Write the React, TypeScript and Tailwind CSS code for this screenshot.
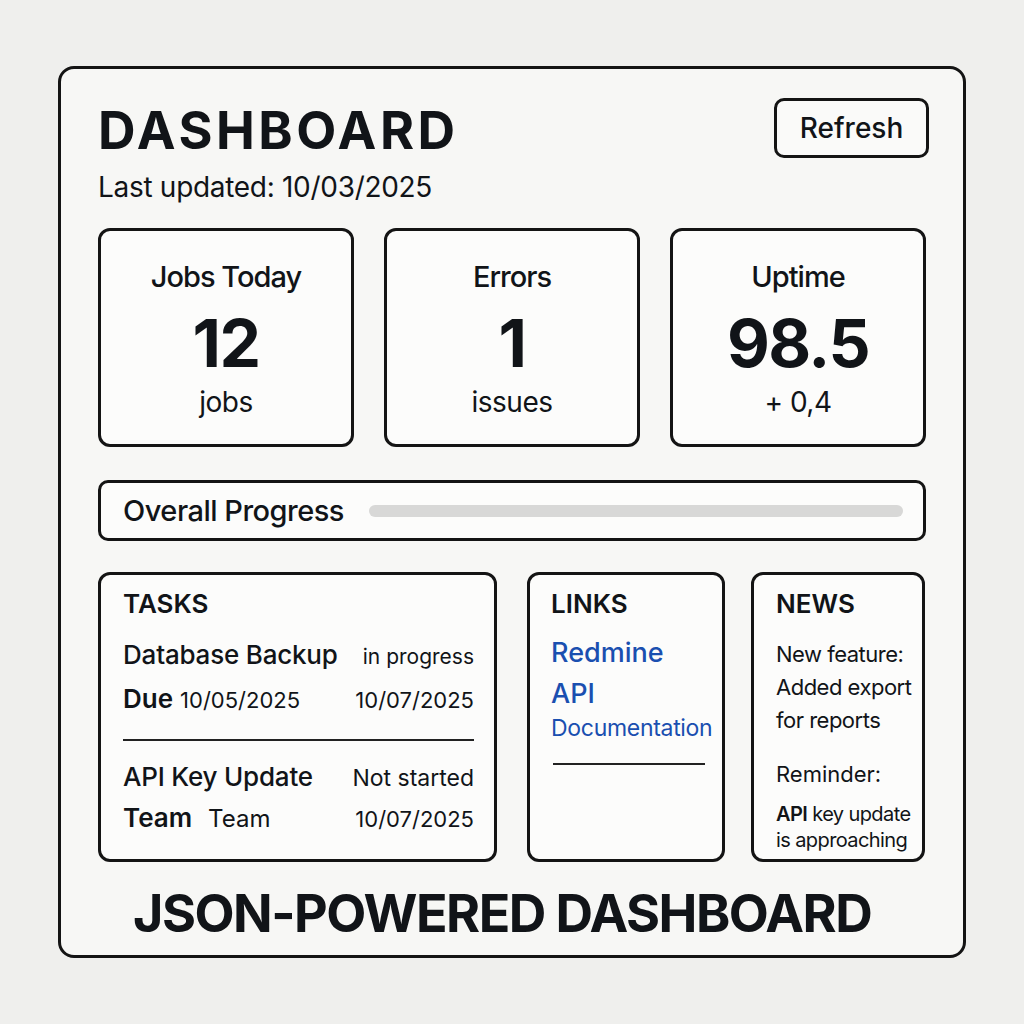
import React from 'react'

const stats = [
  { title: 'Jobs Today', value: '12', sub: 'jobs' },
  { title: 'Errors', value: '1', sub: 'issues' },
  { title: 'Uptime', value: '98.5', sub: '+ 0,4' },
]

function StatCard({ title, value, sub }: { title: string; value: string; sub: string }) {
  return (
    <div className="flex h-[219px] flex-col items-center rounded-[12px] border-[3px] border-[#141414] bg-[#fcfcfb] pt-[30px]">
      <div className="text-[29px] font-medium leading-[32px] tracking-[-1px]">{title}</div>
      <div className="mt-[17px] text-[66px] font-bold leading-[66px] tracking-[-1.5px]">{value}</div>
      <div className="mt-[10px] text-[28px] leading-[32px] tracking-[-0.5px]">{sub}</div>
    </div>
  )
}

export default function App() {
  return (
    <div
      className="min-h-screen w-full bg-[#efefed] pt-[66px] text-[#111418]"
      style={{ fontFamily: 'Inter, "Noto Sans", sans-serif' }}
    >
      <div className="ml-[58px] flex h-[892px] w-[908px] flex-col rounded-[16px] border-[3px] border-[#141414] bg-[#f7f7f5] px-[37px] pt-[29px]">
        {/* header */}
        <div className="flex items-start justify-between">
          <div className="mt-[7px]">
            <h1 className="text-[52px] font-bold leading-[52px] tracking-[3.5px]">DASHBOARD</h1>
            <p className="mt-[14px] text-[28px] leading-[32px] tracking-[-0.3px]">Last updated: 10/03/2025</p>
          </div>
          <button
            type="button"
            className="mr-[-3px] flex h-[60px] w-[155px] items-center justify-center rounded-[10px] border-[3px] border-[#141414] bg-[#fafaf9] text-[28px] font-medium leading-[32px]"
          >
            Refresh
          </button>
        </div>

        {/* stats */}
        <div className="mt-[25px] grid grid-cols-3 gap-[30px]">
          {stats.map((s) => (
            <StatCard key={s.title} {...s} />
          ))}
        </div>

        {/* progress */}
        <div className="mt-[33px] flex h-[61px] items-center rounded-[10px] border-[3px] border-[#141414] bg-[#fcfcfb] pl-[22px] pr-[20px]">
          <span className="text-[29px] font-medium leading-[32px] tracking-[-0.5px]">Overall Progress</span>
          <div className="ml-[25px] h-[12px] flex-1 rounded-full bg-[#d8d8d7]" />
        </div>

        {/* bottom */}
        <div className="mt-[31px] flex h-[290px]">
          <div className="w-[399px] rounded-[12px] border-[3px] border-[#141414] bg-[#fcfcfb] pl-[22px] pr-[20px] pt-[14px]">
            <div className="text-[26px] font-semibold leading-[30px]">TASKS</div>
            <div className="mt-[21px] flex items-baseline justify-between leading-[30px]">
              <span className="text-[26px] font-medium tracking-[-0.2px]">Database Backup</span>
              <span className="text-[21px]">in progress</span>
            </div>
            <div className="mt-[12px] flex items-baseline justify-between leading-[30px]">
              <span>
                <span className="text-[26px] font-semibold">Due</span>
                <span className="ml-[7px] text-[22px]">10/05/2025</span>
              </span>
              <span className="text-[22px]">10/07/2025</span>
            </div>
            <div className="mt-[22px] h-[2px] bg-[#222]" />
            <div className="mt-[21px] flex items-baseline justify-between leading-[30px]">
              <span className="text-[26px] font-medium tracking-[-0.2px]">API Key Update</span>
              <span className="text-[23px]">Not started</span>
            </div>
            <div className="mt-[10px] flex items-baseline justify-between leading-[30px]">
              <span>
                <span className="text-[26px] font-semibold">Team</span>
                <span className="ml-[16px] text-[24px]">Team</span>
              </span>
              <span className="text-[22px]">10/07/2025</span>
            </div>
          </div>

          <div className="ml-[30px] w-[198px] rounded-[12px] border-[3px] border-[#141414] bg-[#fcfcfb] pl-[21px] pt-[14px]">
            <div className="text-[26px] font-semibold leading-[30px]">LINKS</div>
            <a href="#" className="mt-[18px] block text-[27px] font-medium leading-[32px] text-[#1a4fb0]">
              Redmine
            </a>
            <a href="#" className="mt-[9px] block text-[27px] font-medium leading-[32px] text-[#1a4fb0]">
              API
            </a>
            <a href="#" className="mt-[4px] block text-[23px] leading-[28px] tracking-[-0.3px] text-[#1a4fb0]">
              Documentation
            </a>
            <div className="ml-[2px] mt-[21px] h-[2px] w-[152px] bg-[#222]" />
          </div>

          <div className="ml-[26px] w-[174px] rounded-[12px] border-[3px] border-[#141414] bg-[#fcfcfb] pl-[22px] pt-[14px]">
            <div className="text-[26px] font-semibold leading-[30px]">NEWS</div>
            <div className="mt-[19px] whitespace-nowrap text-[22px] leading-[33px] tracking-[-0.5px]">
              <div>New feature:</div>
              <div>Added export</div>
              <div>for reports</div>
            </div>
            <div className="mt-[21px] text-[22px] leading-[33px]">Reminder:</div>
            <div className="mt-[10px] whitespace-nowrap text-[20px] leading-[26px] tracking-[-0.6px]">
              <div>
                <span className="font-semibold">API</span> key update
              </div>
              <div>is approaching</div>
            </div>
          </div>
        </div>

        {/* footer */}
        <div className="ml-[35px] mt-[26px] whitespace-nowrap text-[52px] font-bold leading-[52px] tracking-[-1.5px]">
          JSON-POWERED DASHBOARD
        </div>
      </div>
    </div>
  )
}
